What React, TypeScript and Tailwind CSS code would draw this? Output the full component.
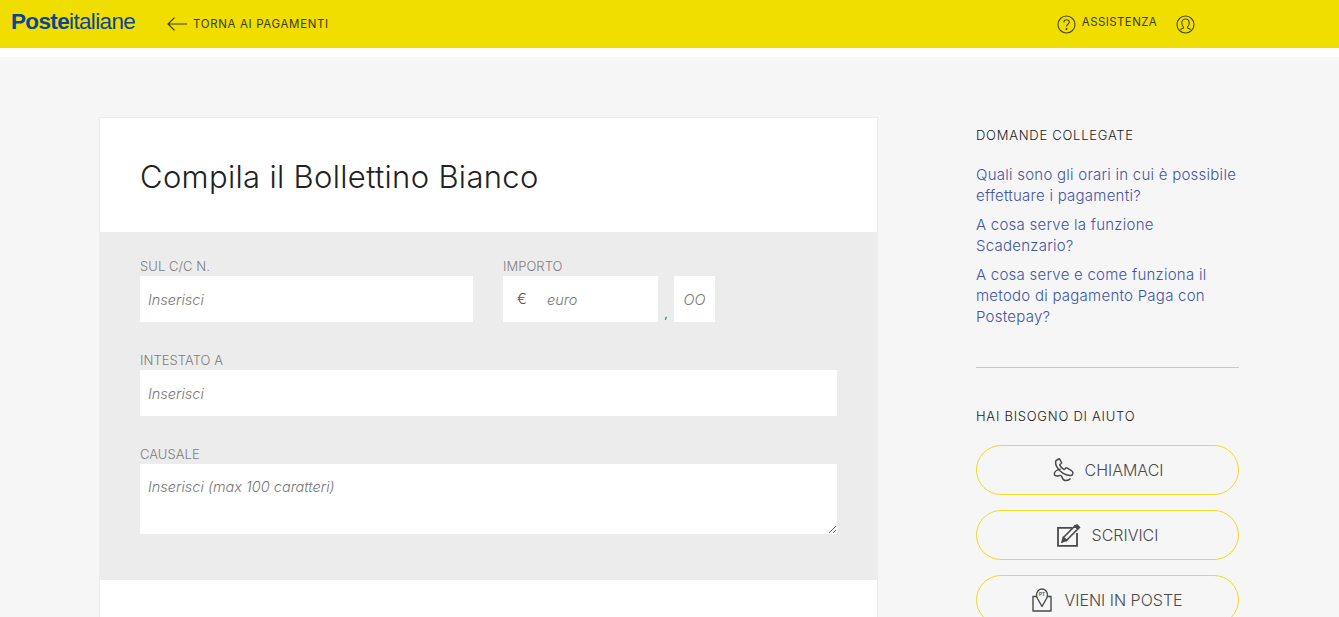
const font = "font-['Inter','Liberation_Sans',sans-serif]";
const labelClass = "text-[13px] leading-[16px] mb-[2px] text-[#7d7d7d] tracking-[0.05px] font-light";

function BackArrow() {
  return (
    <svg width="20" height="14" viewBox="0 0 20 14" fill="none" stroke="#3c3c14" strokeWidth="1.2" className="shrink-0">
      <path d="M20 7H1M7.500 .6 1 7l6.500 6.400" />
    </svg>
  );
}

function HelpIcon() {
  return (
    <svg width="19" height="19" viewBox="0 0 19 19" fill="none" stroke="#4a4a1a" strokeWidth="1.1">
      <circle cx="9.5" cy="9.5" r="8.5" />
      <path d="M6.8 7.4c0-1.600 1.200-2.600 2.800-2.600s2.700 1 2.700 2.300c0 2.100-2.800 2.200-2.800 4.400" />
      <circle cx="9.5" cy="14" r="0.5" fill="#4a4a1a" />
    </svg>
  );
}

function UserIcon() {
  return (
    <svg width="19" height="19" viewBox="0 0 19 19" fill="none" stroke="#4a4a1a" strokeWidth="1.1">
      <circle cx="9.5" cy="9.5" r="8.5" />
      <path d="M7.4 11.800C6.300 10.800 5.800 9.400 5.800 8c0-2.300 1.500-4 3.700-4s3.700 1.700 3.700 4c0 1.400-.5 2.800-1.600 3.800v1.100c1.200.4 2.300 1 3 1.700M7.400 11.800v1.100c-1.200.4-2.300 1-3 1.700" />
    </svg>
  );
}

function PhoneIcon() {
  return (
    <svg width="22" height="24" viewBox="-2 0 22 24" fill="none" stroke="#4a4a4a" strokeWidth="1.5" strokeLinejoin="round" className="overflow-visible">
      <path d="M3 2.500 5.600 1c.5-.2 1 0 1.200.4l1.700 3c.2.4.1.8-.3 1.100L7 6.300c-.3.300-.3.700-.1 1 .9 1.700 2.100 3 3.900 4 .4.200.8.100 1-.2l.8-1c.3-.3.800-.4 1.200-.2l4.300 2.500c1.300.8 2 1.800 1.800 3-.2 1-1.200 2.100-2.300 2.100-4.800.1-10.600-3.200-13.300-8C2.800 7.700 2.100 4.300 3 2.500Z" />
      <path d="M7.600 11.200C4.400 11.600 1.200 13.400 1.300 16c.1 2.100 2.600 2.200 4.400 1.700 1.500-.4 2.900-.2 3.300 1.300.4 1.600 1.500 3.600 4 3.600 1.800 0 3.500-.8 4.500-2.100" />
    </svg>
  );
}

function PencilIcon() {
  return (
    <svg width="24" height="23" viewBox="0 0 24 23" fill="none" stroke="#4a4a4a" strokeWidth="1.5">
      <path d="M15.500 3.800H1v18h19V9" strokeWidth="1.800" />
      <path d="M6.500 13.500 17.800 2l3 3L9.400 16.500l-3-3Z" strokeLinejoin="round" strokeWidth="1.700" />
      <path d="M20 .9l2.600 2.600-1.800 1.500-3-3L20 .9Z" fill="#4a4a4a" strokeLinejoin="round" />
      <path d="M5 18l1.300-4.500 3.100 3L5 18Z" fill="#4a4a4a" />
    </svg>
  );
}

function PinIcon() {
  return (
    <svg width="20" height="24" viewBox="0 0 20 24" fill="none" stroke="#4a4a4a" strokeWidth="1.4" strokeLinejoin="round">
      <path d="M5.500 8.500H1v14.500h18V8.500h-4.500" />
      <path d="M10 18.500 5.500 10.500C4.700 9 4.500 8 4.500 6.800 4.500 3.500 7 1 10 1s5.500 2.500 5.500 5.800c0 1.200-.2 2.200-1 3.700L10 18.500Z" fill="#f6f6f6" />
      <text x="10" y="7.500" textAnchor="middle" fontSize="4.500" fontWeight="700" fill="#4a4a4a" stroke="none">PT</text>
    </svg>
  );
}

function Field({ label, width, placeholder }: { label: string; width: string; placeholder: string }) {
  return (
    <div className={`flex flex-col ${width}`}>
      <span className={labelClass}>{label}</span>
      <div className="h-[46px] bg-white pl-2 pt-[1px] flex items-center text-[14.500px] italic font-light text-[#777]">
        {placeholder}
      </div>
    </div>
  );
}

function HelpButton({ icon, label, gap }: { icon: React.ReactNode; label: string; gap: string }) {
  return (
    <div className={`h-[50px] shrink-0 rounded-[25px] border border-[#eedc22] flex items-center justify-center ${gap} text-[16px] font-light text-[#4a4a4a]`}>
      {icon}
      <span>{label}</span>
    </div>
  );
}

export default function App() {
  return (
    <div className={`h-screen overflow-hidden bg-[#f6f6f6] ${font}`}>
      <header className="h-[48px] bg-[#f0de00] flex items-center text-[#3c3c14]">
        <div className="ml-[11px] w-[156px] -mt-[4px] font-['Liberation_Sans',sans-serif] text-[22.500px] leading-[28px] tracking-[-0.65px] text-[#0b4694]">
          <span className="font-bold">Poste</span>italiane
        </div>
        <BackArrow />
        <span className="ml-[6px] mt-[2px] text-[11.500px] tracking-[0.65px]">TORNA AI PAGAMENTI</span>
        <div className="ml-[728px] flex items-center">
          <HelpIcon />
          <span className="ml-[6px] -mt-[2px] text-[11.500px] tracking-[0.4px]">ASSISTENZA</span>
          <span className="ml-[19px]"><UserIcon /></span>
        </div>
      </header>
      <div className="h-[9px] bg-white" />
      <main className="flex pt-[60px] pl-[99px]">
        <section className="w-[779px] shrink-0 bg-white border border-[#ececec]">
          <h1 className="h-[114px] pl-[40px] pt-[39px] text-[31px] leading-[40px] font-light tracking-[0.32px] text-[#222]">
            Compila il Bollettino Bianco
          </h1>
          <div className="h-[348px] bg-[#ececec] pl-[40px] pt-[26px] flex flex-col gap-[30px]">
            <div className="flex gap-[30px]">
              <Field label="SUL C/C N." width="w-[333px]" placeholder="Inserisci" />
              <div className="flex flex-col">
                <span className={labelClass}>IMPORTO</span>
                <div className="flex">
                  <div className="w-[155px] h-[46px] bg-white pt-[1px] flex items-center text-[14.500px] text-[#777]">
                    <span className="ml-[14px] w-[30px] -mt-[2px] text-[#555] font-light">€</span>
                    <span className="italic font-light">euro</span>
                  </div>
                  <span className="w-[16px] h-[43px] text-[12px] text-[#555] flex items-end justify-center leading-[10px]">,</span>
                  <div className="w-[41px] h-[46px] bg-white pt-[1px] flex items-center justify-center text-[14.500px] italic font-light text-[#777]">
                    OO
                  </div>
                </div>
              </div>
            </div>
            <Field label="INTESTATO A" width="w-[697px]" placeholder="Inserisci" />
            <div className="flex flex-col w-[697px]">
              <span className={labelClass}>CAUSALE</span>
              <textarea
                placeholder="Inserisci (max 100 caratteri)"
                className="h-[70px] bg-white pl-2 pt-[13px] text-[14.500px] leading-[20px] italic font-light text-[#777] placeholder:text-[#777] outline-none"
              />
            </div>
          </div>
          <div className="h-[200px]" />
        </section>
        <aside className="ml-[98px] w-[263px] shrink-0 pt-[10px]">
          <h2 className="text-[13px] leading-[16px] tracking-[0.75px] font-light text-[#222]">DOMANDE COLLEGATE</h2>
          <div className="mt-[21px] flex flex-col gap-[8px] text-[15px] leading-[21px] tracking-[0.25px] font-light text-[#3f55a5]">
            <p>Quali sono gli orari in cui è possibile effettuare i pagamenti?</p>
            <p>A cosa serve la funzione Scadenzario?</p>
            <p>A cosa serve e come funziona il metodo di pagamento Paga con Postepay?</p>
          </div>
          <div className="mt-[40px] border-t border-[#c9c9c9]" />
          <h2 className="mt-[40px] text-[13px] leading-[16px] tracking-[0.75px] font-light text-[#222]">HAI BISOGNO DI AIUTO</h2>
          <div className="mt-[21px] flex flex-col gap-[15px]">
            <HelpButton icon={<PhoneIcon />} label="CHIAMACI" gap="gap-[11px]" />
            <HelpButton icon={<PencilIcon />} label="SCRIVICI" gap="gap-[11px]" />
            <HelpButton icon={<PinIcon />} label="VIENI IN POSTE" gap="gap-[12px]" />
          </div>
        </aside>
      </main>
    </div>
  );
}
